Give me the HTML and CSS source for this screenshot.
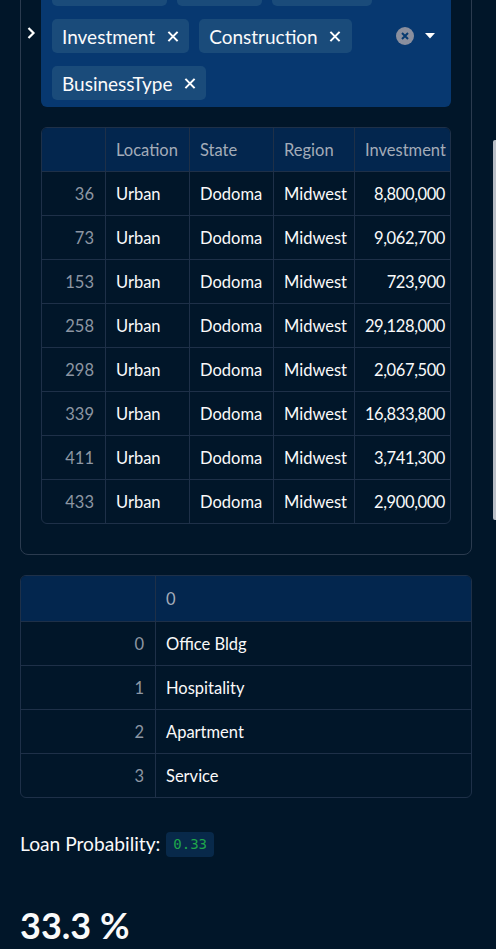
FILE: index.html
```html
<!DOCTYPE html>
<html>
<head>
<meta charset="utf-8">
<link rel="stylesheet" href="styles.css">
</head>
<body>
<div class="sidebar-toggle">
  <svg width="10" height="14" viewBox="0 0 10 14"><path d="M2.5 2 L7.5 7 L2.5 12" fill="none" stroke="#ffffff" stroke-width="2.2"/></svg>
</div>
<div class="scroll-thumb"></div>
<main class="main">
  <section class="expander">
    <div class="multiselect">
      <div class="tags">
        <span class="tag tag-w1"></span>
        <span class="tag tag-w2"></span>
        <span class="tag tag-w3"></span>
        <span class="tag">Investment <i class="x"></i></span>
        <span class="tag">Construction <i class="x"></i></span>
        <span class="tag">BusinessType <i class="x"></i></span>
      </div>
      <div class="indicators">
        <span class="clear">
          <svg width="18" height="18" viewBox="0 0 18 18"><circle cx="9" cy="9" r="9" fill="#8a8f9e"/><path d="M6 6 L12 12 M12 6 L6 12" stroke="#083a70" stroke-width="2"/></svg>
        </span>
        <span class="caret">
          <svg width="10" height="6" viewBox="0 0 10 6"><path d="M0 0 L10 0 L5 5.5 Z" fill="#ffffff"/></svg>
        </span>
      </div>
    </div>

    <div class="grid grid-a">
      <div class="h"></div><div class="h">Location</div><div class="h">State</div><div class="h">Region</div><div class="h">Investment</div>
      <div class="i">36</div><div>Urban</div><div>Dodoma</div><div>Midwest</div><div class="n">8,800,000</div>
      <div class="i">73</div><div>Urban</div><div>Dodoma</div><div>Midwest</div><div class="n">9,062,700</div>
      <div class="i">153</div><div>Urban</div><div>Dodoma</div><div>Midwest</div><div class="n">723,900</div>
      <div class="i">258</div><div>Urban</div><div>Dodoma</div><div>Midwest</div><div class="n">29,128,000</div>
      <div class="i">298</div><div>Urban</div><div>Dodoma</div><div>Midwest</div><div class="n">2,067,500</div>
      <div class="i">339</div><div>Urban</div><div>Dodoma</div><div>Midwest</div><div class="n">16,833,800</div>
      <div class="i">411</div><div>Urban</div><div>Dodoma</div><div>Midwest</div><div class="n">3,741,300</div>
      <div class="i last">433</div><div class="last">Urban</div><div class="last">Dodoma</div><div class="last">Midwest</div><div class="n last">2,900,000</div>
    </div>
  </section>

  <div class="grid grid-b">
    <div class="h"></div><div class="h">0</div>
    <div class="i">0</div><div>Office Bldg</div>
    <div class="i">1</div><div>Hospitality</div>
    <div class="i">2</div><div>Apartment</div>
    <div class="i last">3</div><div class="last">Service</div>
  </div>

  <p class="prob">Loan Probability: <code>0.33</code></p>

  <h1 class="big">33.3 %</h1>
</main>
</body>
</html>
```

FILE: styles.css
```css
html, body {
  margin: 0;
  padding: 0;
  background: #011629;
  color: #fafafa;
  font-family: Lato, "Open Sans", sans-serif;
  overflow: hidden;
}

.sidebar-toggle {
  position: absolute;
  left: 26px;
  top: 24px;
}

.scroll-thumb {
  position: absolute;
  right: 0;
  top: 140px;
  width: 3px;
  height: 380px;
  background: #b9bec6;
  border-radius: 2px 0 0 2px;
}

.main {
  width: 452px;
  margin-left: 20px;
}

.expander {
  margin-top: -58px;
  border: 1px solid #2b3b4f;
  border-radius: 8px;
  padding: 22px 20px 30px 20px;
}

.multiselect {
  display: flex;
  align-items: center;
  background: #073870;
  border-radius: 6px;
  padding: 7px 16px 7px 11px;
}

.tags {
  flex: 1;
  display: flex;
  flex-wrap: wrap;
  column-gap: 10px;
  row-gap: 13px;
}

.tag {
  display: inline-flex;
  align-items: center;
  height: 34px;
  padding: 0 11px 0 10px;
  background: #1a4b7a;
  border-radius: 5px;
  font-size: 19px;
  color: #fafafa;
  box-sizing: border-box;
}
.tag-w1 { width: 115px; }
.tag-w2 { width: 85px; }
.tag-w3 { width: 100px; }

.x {
  position: relative;
  display: inline-block;
  width: 11px;
  height: 11px;
  margin-left: 12px;
}
.x::before, .x::after {
  content: "";
  position: absolute;
  left: 4.5px;
  top: -1px;
  width: 2px;
  height: 13px;
  background: #ffffff;
  transform: rotate(45deg);
}
.x::after { transform: rotate(-45deg); }

.indicators {
  display: flex;
  align-items: center;
  gap: 11px;
}
.indicators span { display: flex; }

.grid {
  display: grid;
  border: 1px solid #1e3048;
  border-radius: 6px;
  overflow: hidden;
  font-size: 16.5px;
}
.grid > div {
  height: 43px;
  display: flex;
  align-items: center;
  padding: 0 10px;
  border-right: 1px solid #1e3048;
  border-bottom: 1px solid #1e3048;
  white-space: nowrap;
  color: #fafafa;
  min-width: 0;
  overflow: hidden;
}
.grid > div.last { border-bottom: none; }
.grid > div.h {
  background: #03264e;
  color: #a3acb9;
}
.grid > div.i {
  justify-content: flex-end;
  padding-right: 11px;
  color: #8d96a3;
}
.grid > div.n {
  justify-content: flex-end;
  padding-right: 5px;
  letter-spacing: -0.4px;
}

.grid-a {
  margin-top: 20px;
  grid-template-columns: 64px 84px 84px 81px minmax(0, 1fr);
}
.grid-a > div:nth-child(5n) { border-right: none; }

.grid-b {
  margin-top: 20px;
  grid-template-columns: 135px minmax(0, 1fr);
}
.grid-b > div:nth-child(2n) { border-right: none; }
.grid-b > div.h { height: 45px; }

.prob {
  margin: 33px 0 0 0;
  font-size: 19.2px;
  line-height: 26px;
  display: flex;
  align-items: center;
  gap: 6px;
}
.prob code {
  font-family: "DejaVu Sans Mono", monospace;
  font-size: 14px;
  color: #1fa64a;
  background: #08294a;
  border-radius: 4px;
  padding: 4px 7px;
  line-height: 17px;
}

.big {
  margin: 50px 0 0 0;
  font-size: 36px;
  font-weight: 700;
  line-height: 1;
}
```
